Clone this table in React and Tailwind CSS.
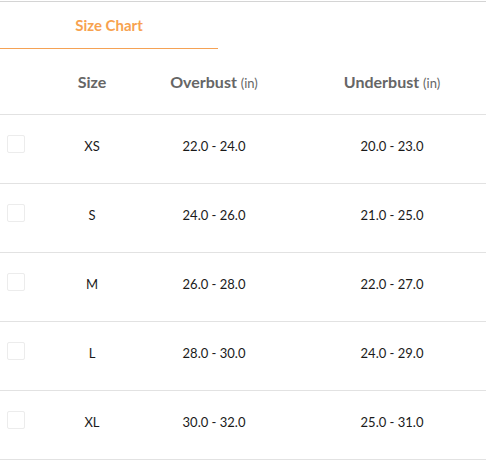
import React from "react";

const rows = [
  { size: "XS", over: "22.0 - 24.0", under: "20.0 - 23.0" },
  { size: "S", over: "24.0 - 26.0", under: "21.0 - 25.0" },
  { size: "M", over: "26.0 - 28.0", under: "22.0 - 27.0" },
  { size: "L", over: "28.0 - 30.0", under: "24.0 - 29.0" },
  { size: "XL", over: "30.0 - 32.0", under: "25.0 - 31.0" },
];

export default function App() {
  return (
    <div className="bg-white min-h-[461px] pt-px" style={{ fontFamily: "Lato, 'Open Sans', sans-serif" }}>
      <div className="w-[486px] border-t border-[#d4d4d4]">
        <div className="w-[218px] h-[47px] border-b border-[#f5a255] flex items-center justify-center">
          <span className="text-[15px] font-bold text-[#f7a24f]">Size Chart</span>
        </div>

        <div className="flex items-center h-[66px] border-b border-[#e2e2e2] text-[#666]">
          <div className="w-[32px]" />
          <div className="w-[120px] text-center text-[16px] font-bold">Size</div>
          <div className="w-[124px] text-center text-[16px] font-bold whitespace-nowrap">
            Overbust <span className="text-[13px] font-normal">(in)</span>
          </div>
          <div className="flex-1 pl-[22px] text-center text-[16px] font-bold">
            Underbust <span className="text-[13px] font-normal">(in)</span>
          </div>
        </div>

        {rows.map((r) => (
          <div key={r.size} className="flex items-center h-[69px] pb-[4px] border-b border-[#e2e2e2] text-[13px] text-[#1a1a1a]">
            <div className="w-[32px] pl-[7px]">
              <div className="w-[18px] h-[18px] mb-[6px] rounded-[2px] border border-[#ececec] bg-white" />
            </div>
            <div className="w-[120px] text-center">{r.size}</div>
            <div className="w-[124px] text-center">{r.over}</div>
            <div className="flex-1 pl-[22px] text-center">{r.under}</div>
          </div>
        ))}
      </div>
    </div>
  );
}
